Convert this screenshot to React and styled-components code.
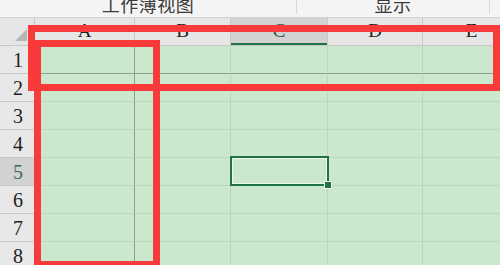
import React from "react";
import styled, { createGlobalStyle } from "styled-components";

const Global = createGlobalStyle`
  html, body { margin: 0; padding: 0; background: #ffffff; overflow: hidden; }
`;

const Page = styled.div`
  position: relative;
  width: 500px;
  height: 265px;
  overflow: hidden;
  background: #cce8cc;
`;

const Ribbon = styled.div`
  display: grid;
  grid-template-columns: 297px 193px 1fr;
  height: 17px;
  background: #f4f4f4;
  border-bottom: 1px solid #d3d3d3;
  overflow: hidden;
`;

const Group = styled.div`
  display: flex;
  justify-content: center;
  align-items: flex-start;
  height: 14px;
  border-right: ${(p) => (p.$last ? "none" : "1px solid #d9d9d9")};
  font-family: "Noto Sans CJK SC", "Noto Sans", sans-serif;
  font-size: 18px;
  line-height: 18px;
  color: #3a3a3a;
`;

const GroupLabel = styled.span`
  margin-top: -5px;
  letter-spacing: 0.5px;
`;

const Sheet = styled.div`
  display: grid;
  grid-template-columns: 35px 100px 96px 97px 95px 98px;
  grid-auto-rows: 28px;
  width: 521px;
`;

const Corner = styled.div`
  position: relative;
  background: #e6e6e6;
  border-right: 1px solid #c8c8c8;
  border-bottom: 1px solid #c8c8c8;
`;

const CornerTriangle = styled.div`
  position: absolute;
  right: 7px;
  bottom: 4px;
  width: 0;
  height: 0;
  border-left: 12px solid transparent;
  border-bottom: 12px solid #b4b4b4;
`;

const ColHead = styled.div`
  display: flex;
  align-items: flex-end;
  justify-content: center;
  padding-bottom: 4px;
  box-sizing: border-box;
  background: ${(p) => (p.$active ? "#d2d2d2" : "#e6e6e6")};
  border-right: 1px solid #c8c8c8;
  border-bottom: 1px solid #c8c8c8;
  box-shadow: ${(p) => (p.$active ? "inset 0 -2px 0 #217346" : "none")};
  font-family: "Liberation Serif", "DejaVu Serif", serif;
  font-size: 19px;
  line-height: 20px;
  color: ${(p) => (p.$active ? "#2d5a40" : "#1e1e1e")};
`;

const RowHead = styled.div`
  display: flex;
  align-items: center;
  justify-content: center;
  box-sizing: border-box;
  background: ${(p) => (p.$active ? "#d2d2d2" : "#e8e8e8")};
  border-right: 1px solid #c8c8c8;
  border-bottom: 1px solid #c8c8c8;
  font-family: "Liberation Serif", "DejaVu Serif", serif;
  font-size: 20px;
  line-height: 20px;
  padding-left: 2px;
  color: ${(p) => (p.$active ? "#3f6b55" : "#1e1e1e")};
`;

const Cell = styled.div`
  position: relative;
  background: #cce8cc;
  border-right: 1px solid ${(p) => (p.$frozenCol ? "#8e9e8e" : "#bcd6bc")};
  border-bottom: 1px solid ${(p) => (p.$frozenRow ? "#8e9e8e" : "#bcd6bc")};
`;

const Selection = styled.div`
  position: absolute;
  left: -1px;
  top: -2px;
  right: -2px;
  bottom: -1px;
  border: 2px solid #217346;
  box-shadow: inset 0 0 0 1px #eef7ee;
  z-index: 2;
`;

const FillHandle = styled.div`
  position: absolute;
  right: -5px;
  bottom: -5px;
  width: 6px;
  height: 6px;
  background: #217346;
  border: 1px solid #eef7ee;
`;

const Mark = styled.div`
  position: absolute;
  left: ${(p) => p.$x}px;
  top: ${(p) => p.$y}px;
  width: ${(p) => p.$w}px;
  height: ${(p) => p.$h}px;
  box-sizing: border-box;
  border: 7px solid #f93a3a;
  z-index: 5;
`;

const cols = ["A", "B", "C", "D", "E"];
const rows = [1, 2, 3, 4, 5, 6, 7, 8];
const activeCol = "C";
const activeRow = 5;

export default function App() {
  return (
    <>
      <Global />
      <Page>
        <Ribbon>
          <Group>
            <GroupLabel>工作薄视图</GroupLabel>
          </Group>
          <Group>
            <GroupLabel>显示</GroupLabel>
          </Group>
          <Group $last />
        </Ribbon>
        <Sheet>
          <Corner>
            <CornerTriangle />
          </Corner>
          {cols.map((c) => (
            <ColHead key={c} $active={c === activeCol}>
              {c}
            </ColHead>
          ))}
          {rows.map((r) => (
            <React.Fragment key={r}>
              <RowHead $active={r === activeRow}>{r}</RowHead>
              {cols.map((c) => {
                const sel = r === activeRow && c === activeCol;
                return (
                  <Cell key={c} $frozenCol={c === "A"} $frozenRow={r === 1}>
                    {sel && (
                      <Selection>
                        <FillHandle />
                      </Selection>
                    )}
                  </Cell>
                );
              })}
            </React.Fragment>
          ))}
        </Sheet>
        <Mark $x={28} $y={25} $w={472} $h={66} />
        <Mark $x={34} $y={40} $w={126} $h={228} />
      </Page>
    </>
  );
}
